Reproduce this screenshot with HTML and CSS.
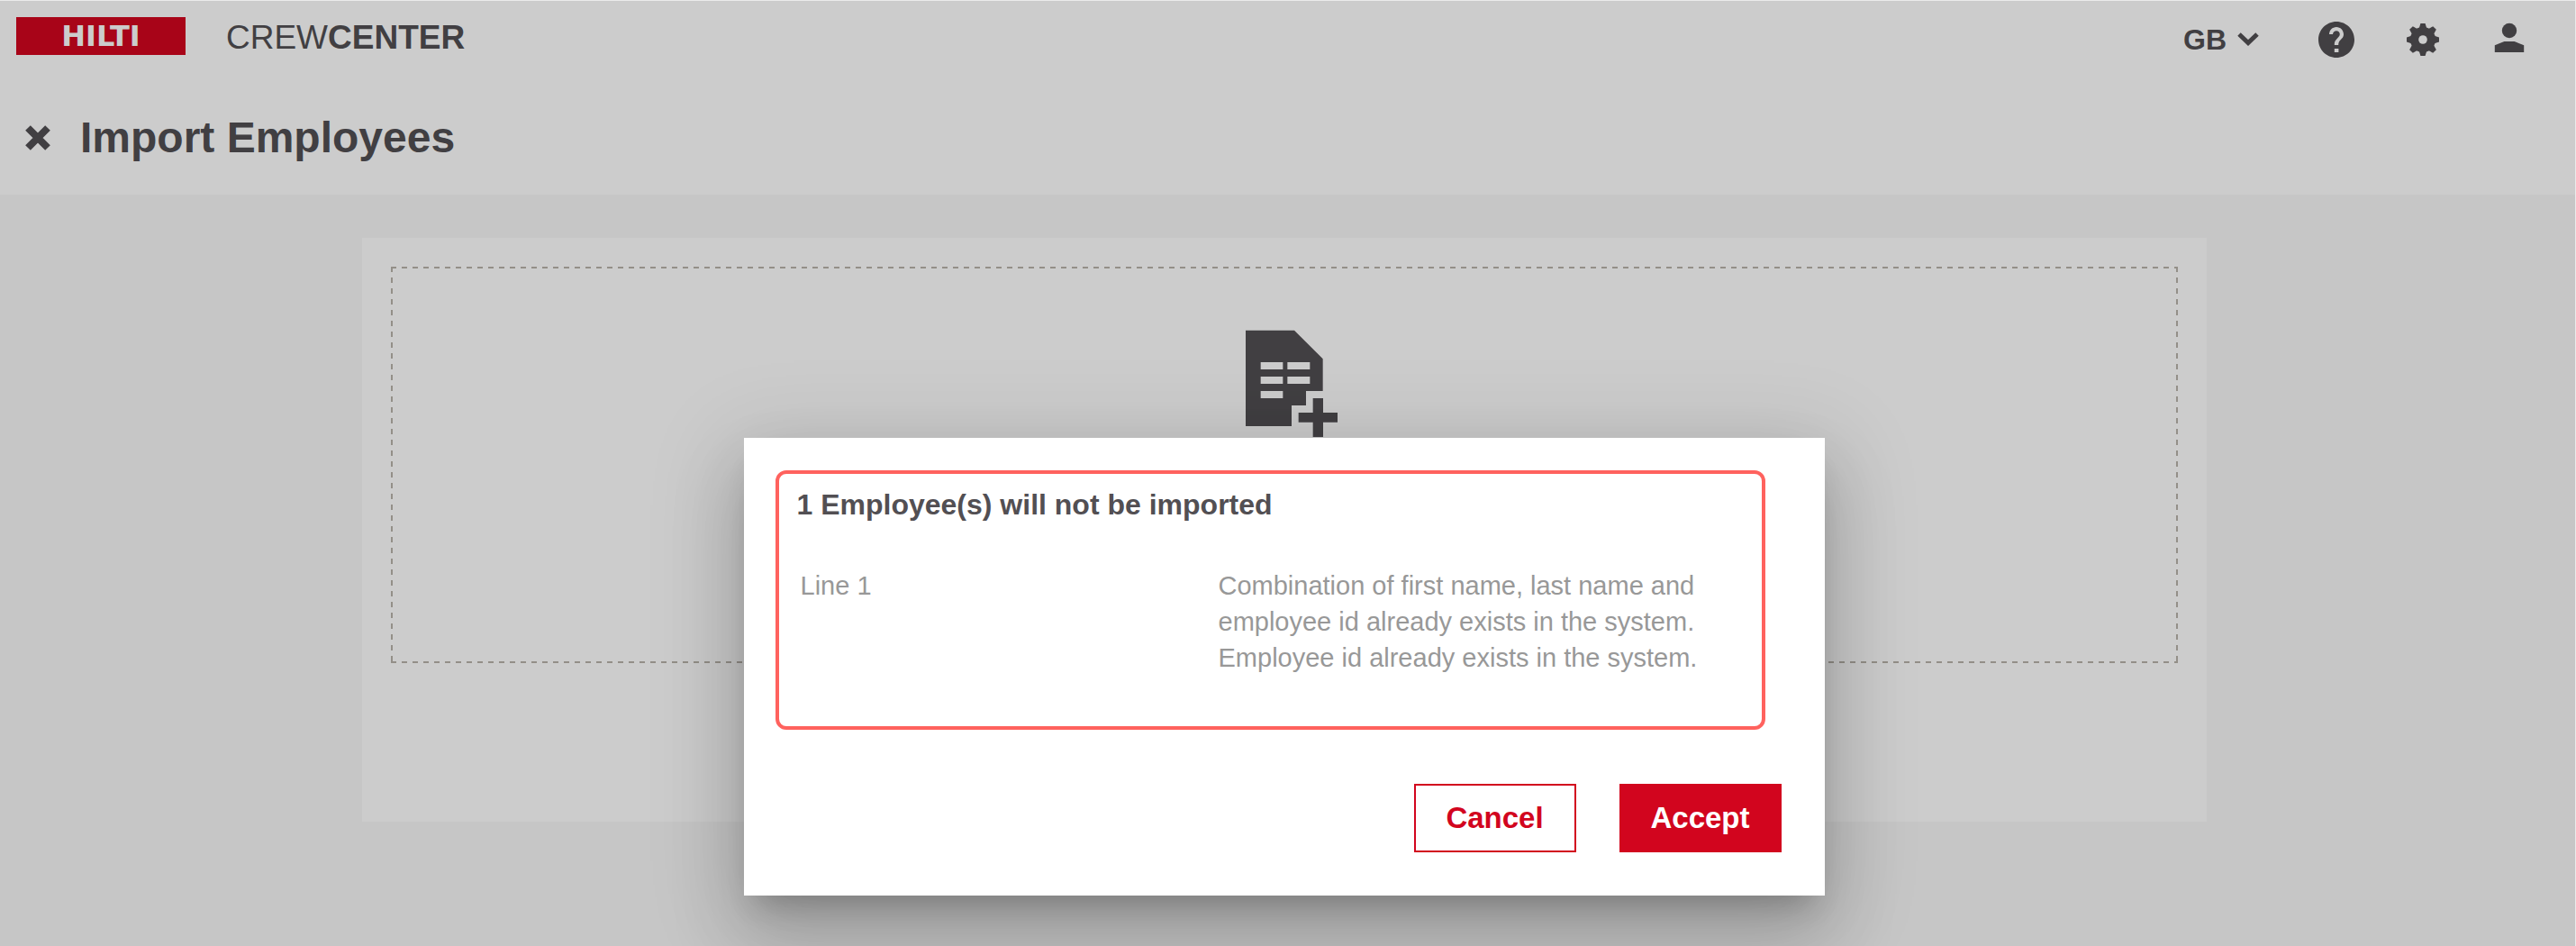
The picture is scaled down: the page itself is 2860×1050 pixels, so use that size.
FILE: index.html
```html
<!DOCTYPE html>
<html lang="en">
<head>
    <meta charset="UTF-8">
    <meta name="viewport" content="width=device-width, initial-scale=1.0">
    <title>Import Employees</title>
    <link rel="stylesheet" href="styles.css">
</head>
<body>

    <!-- Header -->
    <header class="header">
        <div class="topbar">
            <a class="brand" href="#">
                <span class="logo">HILTI</span>
                <span class="app-name">CREW<b>CENTER</b></span>
            </a>
            <nav class="actions">
                <button class="language" type="button">
                    GB
                    <svg width="24" height="16" viewBox="0 0 24 16"><path d="M2 2l10 9.500 10-9.500" fill="none" stroke="currentColor" stroke-width="5"/></svg>
                </button>
                <button class="icon-btn" type="button" aria-label="Help">
                    <svg viewBox="0 0 24 24"><path d="M12 2C6.48 2 2 6.48 2 12s4.480 10 10 10 10-4.480 10-10S17.520 2 12 2zm1.200 17h-2.300v-2h2.300v2zm1.900-7.700l-.9.900c-.7.700-1.100 1.400-1.100 2.800h-2.200v-.5c0-1.100.4-2.100 1.200-2.800l1.200-1.300c.4-.4.6-.9.600-1.400 0-1.100-.9-1.900-1.900-1.900s-2 .8-2 1.900H8c0-2.200 1.800-4 4-4s4 1.800 4 4c0 .9-.3 1.700-.9 2.300z"/></svg>
                </button>
                <button class="icon-btn" type="button" aria-label="Settings">
                    <svg viewBox="-12 -12 24 24">
                        <mask id="hole"><rect x="-12" y="-12" width="24" height="24" fill="#fff"/><circle r="2.400" fill="#000"/></mask>
                        <g mask="url(#hole)">
                            <circle r="7"/>
                            <path d="M-2.200-6L-1.300-9H1.300L2.200-6V6L1.300 9H-1.300L-2.200 6Z"/>
                            <path d="M-2.200-6L-1.300-9H1.300L2.200-6V6L1.300 9H-1.300L-2.200 6Z" transform="rotate(90)"/>
                            <path d="M-2.200-6L-1.300-9.200H1.300L2.200-6V6L1.300 9.200H-1.300L-2.200 6Z" transform="rotate(45)"/>
                            <path d="M-2.200-6L-1.300-9.200H1.300L2.200-6V6L1.300 9.200H-1.300L-2.200 6Z" transform="rotate(135)"/>
                        </g>
                    </svg>
                </button>
                <button class="icon-btn" type="button" aria-label="Account">
                    <svg viewBox="0 0 24 24"><circle cx="12" cy="7" r="4.100"/><path d="M3.900 19v-3.900L9.200 13h5.600l5.300 2.100V19z"/></svg>
                </button>
            </nav>
        </div>
        <div class="page-title">
            <button class="close-btn" type="button" aria-label="Close">
                <svg width="28" height="28" viewBox="0 0 28 28"><path d="M3 3l22 22M25 3L3 25" fill="none" stroke="currentColor" stroke-width="8"/></svg>
            </button>
            <h1>Import Employees</h1>
        </div>
    </header>

    <!-- Upload area -->
    <main class="content">
        <section class="card">
            <div class="dropzone">
                <svg width="102" height="119" viewBox="0 0 306 357">
                    <path fill-rule="evenodd" d="M0 2H162L257 97V204H201V252H153V321H0ZM50 108v24h74v-24ZM139 108v24h75v-24ZM50 156v24h74v-24ZM139 156v24h75v-24ZM50 204v24h74v-24Z"/>
                    <path d="M224 228h34v48h48v32h-48v49h-34v-49h-48v-32h48z"/>
                </svg>
            </div>
        </section>
    </main>

    <!-- Import result dialog -->
    <div class="overlay">
        <div class="dialog" role="dialog" aria-labelledby="dialog-title">
            <div class="errors">
                <h2 id="dialog-title">1 Employee(s) will not be imported</h2>
                <table>
                    <tbody>
                        <tr>
                            <td class="line">Line 1</td>
                            <td>Combination of first name, last name and employee id already exists in the system.<br>Employee id already exists in the system.</td>
                        </tr>
                    </tbody>
                </table>
            </div>
            <div class="buttons">
                <button class="btn" type="button">Cancel</button>
                <button class="btn btn-primary" type="button">Accept</button>
            </div>
        </div>
    </div>

</body>
</html>
```
FILE: styles.css
```css
/* General Styles */
* {
    box-sizing: border-box;
}

body {
    position: relative;
    min-height: 100vh;
    margin: 0;
    font-family: "Liberation Sans", Arial, sans-serif;
    font-size: 29px;
    color: #524f53;
    background-color: #f8f8f8;
}

h1, h2 {
    margin: 0;
}

button {
    padding: 0;
    border: none;
    background: none;
    font: inherit;
    font-weight: bold;
    color: inherit;
    cursor: pointer;
}

svg {
    display: block;
    fill: currentColor;
}

/* Header */
.header {
    height: 216px;
    background-color: #fff;
}

.topbar {
    display: flex;
    justify-content: space-between;
    padding: 19px 50px 0 18px;
}

.brand {
    display: flex;
    align-items: center;
    height: 42px;
    gap: 45px;
    color: inherit;
    text-decoration: none;
}

.logo {
    width: 188px;
    background-color: #d2051e;
    color: #fff;
    font-family: "DejaVu Sans", sans-serif;
    font-size: 32px;
    font-weight: bold;
    line-height: 42px;
    text-align: center;
}

.app-name {
    padding-top: 4px;
    font-size: 37px;
}

.actions {
    display: flex;
    align-items: center;
    height: 50px;
    gap: 48px;
}

.language {
    display: flex;
    align-items: center;
    gap: 12px;
    margin-right: 14px;
    font-size: 32px;
}

.icon-btn svg {
    width: 48px;
    height: 48px;
}

.page-title {
    display: flex;
    align-items: center;
    gap: 33px;
    padding: 56px 28px 0;
}

.page-title h1 {
    font-size: 48px;
    line-height: 56px;
}

/* Upload area */
.content {
    padding: 48px 9px 48px 0;
}

.card {
    max-width: 2048px;
    min-height: 648px;
    margin: 0 auto;
    padding: 32px;
    background-color: #fff;
}

/* Dashed frame, 6px dash and 6px gap */
.dropzone {
    display: flex;
    justify-content: center;
    min-height: 440px;
    padding: 70px 0 0 16px;
    background:
        repeating-linear-gradient(90deg, #b8b3ab 0 6px, transparent 6px 12px) top / 100% 2px no-repeat,
        repeating-linear-gradient(90deg, #b8b3ab 0 6px, transparent 6px 12px) bottom / 100% 2px no-repeat,
        repeating-linear-gradient(#b8b3ab 0 6px, transparent 6px 12px) left / 2px 100% no-repeat,
        repeating-linear-gradient(#b8b3ab 0 6px, transparent 6px 12px) right / 2px 100% no-repeat;
}

/* Dialog */
.overlay {
    position: absolute;
    inset: 0;
    padding: 485px 8px 0 0;
    border-top: 1px solid #ebebeb;
    border-right: 1px solid #ebebeb;
    background-color: rgba(0, 0, 0, 0.2);
    overflow: hidden;
}

.dialog {
    max-width: 1200px;
    margin: 0 auto;
    padding: 36px 48px 48px 35px;
    background-color: #fff;
    box-shadow: 0 22px 30px -14px rgba(0, 0, 0, 0.2),
        0 48px 76px 6px rgba(0, 0, 0, 0.14),
        0 18px 92px 16px rgba(0, 0, 0, 0.12);
}

.errors {
    min-height: 288px;
    margin-right: 18px;
    padding: 16px 20px;
    border: 4px solid #ff625e;
    border-radius: 12px;
}

.errors h2 {
    font-size: 32px;
    line-height: 36px;
}

.errors table {
    width: 100%;
    margin-top: 52px;
    border-collapse: collapse;
    line-height: 40px;
    color: #989898;
}

.errors td {
    padding: 0 40px 0 0;
    vertical-align: top;
}

.errors .line {
    width: 468px;
    padding-left: 4px;
}

.buttons {
    display: flex;
    justify-content: flex-end;
    gap: 48px;
    margin-top: 60px;
}

.btn {
    width: 180px;
    height: 76px;
    border: 2px solid #d2051e;
    font-size: 33px;
    color: #d2051e;
}

.btn-primary {
    background-color: #d2051e;
    color: #fff;
}
```
